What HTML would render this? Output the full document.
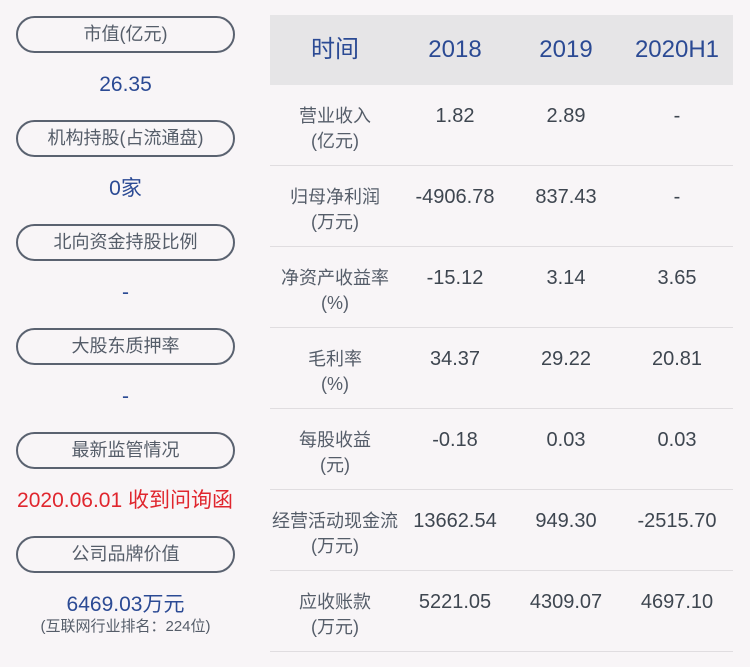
<!DOCTYPE html><html><head><meta charset="utf-8"><style>
body{margin:0;width:750px;height:667px;background:#f8f5f7;font-family:"Liberation Sans","Noto Sans CJK SC",sans-serif;position:relative;overflow:hidden}
.pill{position:absolute;left:16px;width:215px;height:33px;border:2px solid #5a6270;border-radius:19px;color:#555d69;font-size:18px;text-align:center;line-height:33px}
.val{position:absolute;left:16px;width:219px;text-align:center;color:#2b4a94;font-size:21px;line-height:24px}
.hd{position:absolute;left:270px;top:15px;width:463px;height:70px;background:#e6e5e7}
.c{position:absolute;text-align:center;width:120px;line-height:30px}
.h{color:#2b4a94;font-size:24px;top:35px}
.row{position:absolute;left:270px;width:463px;height:80px;border-bottom:1px solid #e0dde0}
.lab{position:absolute;left:0;width:130px;text-align:center;color:#555d69;font-size:18px;line-height:25px;top:19px}
.v{position:absolute;top:19px;width:120px;text-align:center;color:#3e4650;font-size:20px;line-height:25px}
</style></head><body>
<div class="pill" style="top:16px">市值(亿元)</div>
<div class="val" style="top:73px">26.35</div>
<div class="pill" style="top:120px">机构持股(占流通盘)</div>
<div class="val" style="top:177px">0家</div>
<div class="pill" style="top:224px">北向资金持股比例</div>
<div class="val" style="top:281px">-</div>
<div class="pill" style="top:328px">大股东质押率</div>
<div class="val" style="top:385px">-</div>
<div class="pill" style="top:432px">最新监管情况</div>
<div class="val" style="top:489px;color:#e0262e;left:0;width:250px;font-size:21px">2020.06.01 收到问询函</div>
<div class="pill" style="top:536px">公司品牌价值</div>
<div class="val" style="top:593px">6469.03万元</div>
<div class="val" style="top:617px;font-size:15px;line-height:20px;color:#555d69">(互联网行业排名：224位)</div>
<div class="hd"></div>
<div class="c h" style="left:275px">时间</div>
<div class="c h" style="left:395px">2018</div>
<div class="c h" style="left:506px">2019</div>
<div class="c h" style="left:617px;width:120px">2020H1</div>
<div class="row" style="top:85px"><div class="lab">营业收入<br>(亿元)</div><div class="v" style="left:125px">1.82</div><div class="v" style="left:236px">2.89</div><div class="v" style="left:347px">-</div></div>
<div class="row" style="top:166px"><div class="lab">归母净利润<br>(万元)</div><div class="v" style="left:125px">-4906.78</div><div class="v" style="left:236px">837.43</div><div class="v" style="left:347px">-</div></div>
<div class="row" style="top:247px"><div class="lab">净资产收益率<br>(%)</div><div class="v" style="left:125px">-15.12</div><div class="v" style="left:236px">3.14</div><div class="v" style="left:347px">3.65</div></div>
<div class="row" style="top:328px"><div class="lab">毛利率<br>(%)</div><div class="v" style="left:125px">34.37</div><div class="v" style="left:236px">29.22</div><div class="v" style="left:347px">20.81</div></div>
<div class="row" style="top:409px"><div class="lab">每股收益<br>(元)</div><div class="v" style="left:125px">-0.18</div><div class="v" style="left:236px">0.03</div><div class="v" style="left:347px">0.03</div></div>
<div class="row" style="top:490px"><div class="lab">经营活动现金流<br>(万元)</div><div class="v" style="left:125px">13662.54</div><div class="v" style="left:236px">949.30</div><div class="v" style="left:347px">-2515.70</div></div>
<div class="row" style="top:571px"><div class="lab">应收账款<br>(万元)</div><div class="v" style="left:125px">5221.05</div><div class="v" style="left:236px">4309.07</div><div class="v" style="left:347px">4697.10</div></div>
</body></html>
